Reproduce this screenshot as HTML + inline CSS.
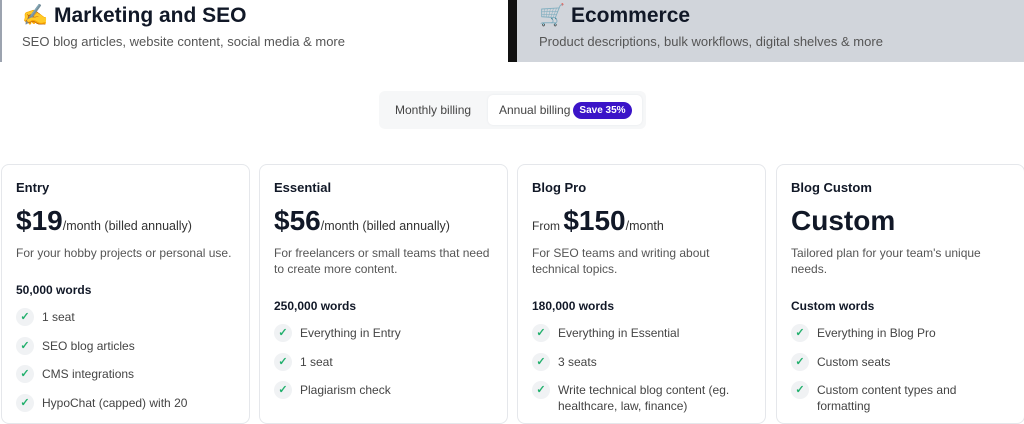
<!DOCTYPE html><html><head><style>
*{margin:0;padding:0;box-sizing:border-box}
body{width:1024px;height:411px;overflow:hidden;background:#fff;font-family:"Liberation Sans",sans-serif;position:relative;color:#111827}
.tab{position:absolute;top:0;height:62px}
.t1{left:0;width:508px;border-left:2px solid #9ca3af;background:#fff}
.t2{left:508px;width:516px;background:#d1d5db;border-left:9px solid #111}
.tab h2{position:absolute;left:20px;top:4px;font-size:21px;font-weight:600;color:#111827}
.tab p{position:absolute;left:20px;top:34px;font-size:13px;color:#555}
.t2 h2,.t2 p{left:22px}
.tog{position:absolute;left:379px;top:91px;width:267px;height:38px;background:#f6f7f8;border-radius:6px}
.tog .m{position:absolute;left:16px;top:12px;font-size:12px;color:#444}
.tog .a{position:absolute;left:109px;top:4px;width:154px;height:30px;background:#fff;border-radius:5px;box-shadow:0 0 2px #e5e7eb}
.tog .a span{position:absolute;left:11px;top:8px;font-size:12px;color:#444}
.badge{position:absolute;left:85px;top:7px;width:59px;height:17px;border-radius:9px;background:#3b14c8;color:#fff;font-size:10px;font-weight:bold;text-align:center;line-height:17px}
.card{position:absolute;top:164px;width:249px;height:260px;border:1px solid #e5e7eb;border-radius:8px;padding:15px 0 0 14px}
.card h3{font-size:13px;font-weight:600;margin-bottom:8px}
.pr{font-size:28px;font-weight:600;height:36px;line-height:36px;white-space:nowrap}
.pr small{font-size:12.5px;font-weight:normal;color:#333}
.pr .f{font-size:12px;font-weight:normal;color:#333}
.d{font-size:12px;color:#555;line-height:16px;margin-top:6px;width:220px;min-height:16px}
.w{font-size:12px;font-weight:bold;margin-top:22px;margin-bottom:12px}
.li{position:relative;padding-left:26px;font-size:12px;color:#444;line-height:16px;margin-bottom:12.5px;width:230px}
.li:before{content:"✓";position:absolute;left:0;top:-1px;width:18px;height:18px;border-radius:9px;background:#f0f2f4;color:#22b06d;font-size:11px;font-weight:bold;text-align:center;line-height:18px}
</style></head><body>
<div class="tab t1"><h2>✍️ Marketing and SEO</h2><p>SEO blog articles, website content, social media &amp; more</p></div>
<div class="tab t2"><h2>🛒 Ecommerce</h2><p>Product descriptions, bulk workflows, digital shelves &amp; more</p></div>
<div class="tog"><span class="m">Monthly billing</span><div class="a"><span>Annual billing</span><div class="badge">Save 35%</div></div></div>
<div class="card" style="left:1px"><h3>Entry</h3><div class="pr">$19<small>/month (billed annually)</small></div><div class="d">For your hobby projects or personal use.</div><div class="w">50,000 words</div>
<div class="li">1 seat</div><div class="li">SEO blog articles</div><div class="li">CMS integrations</div><div class="li">HypoChat (capped) with 20</div></div>
<div class="card" style="left:259px"><h3>Essential</h3><div class="pr">$56<small>/month (billed annually)</small></div><div class="d">For freelancers or small teams that need to create more content.</div><div class="w">250,000 words</div>
<div class="li">Everything in Entry</div><div class="li">1 seat</div><div class="li">Plagiarism check</div></div>
<div class="card" style="left:517px"><h3>Blog Pro</h3><div class="pr"><span class="f">From </span>$150<small>/month</small></div><div class="d">For SEO teams and writing about technical topics.</div><div class="w">180,000 words</div>
<div class="li">Everything in Essential</div><div class="li">3 seats</div><div class="li">Write technical blog content (eg. healthcare, law, finance)</div></div>
<div class="card" style="left:776px"><h3>Blog Custom</h3><div class="pr">Custom</div><div class="d">Tailored plan for your team's unique needs.</div><div class="w">Custom words</div>
<div class="li">Everything in Blog Pro</div><div class="li">Custom seats</div><div class="li" style="width:200px">Custom content types and formatting</div></div>
</body></html>
